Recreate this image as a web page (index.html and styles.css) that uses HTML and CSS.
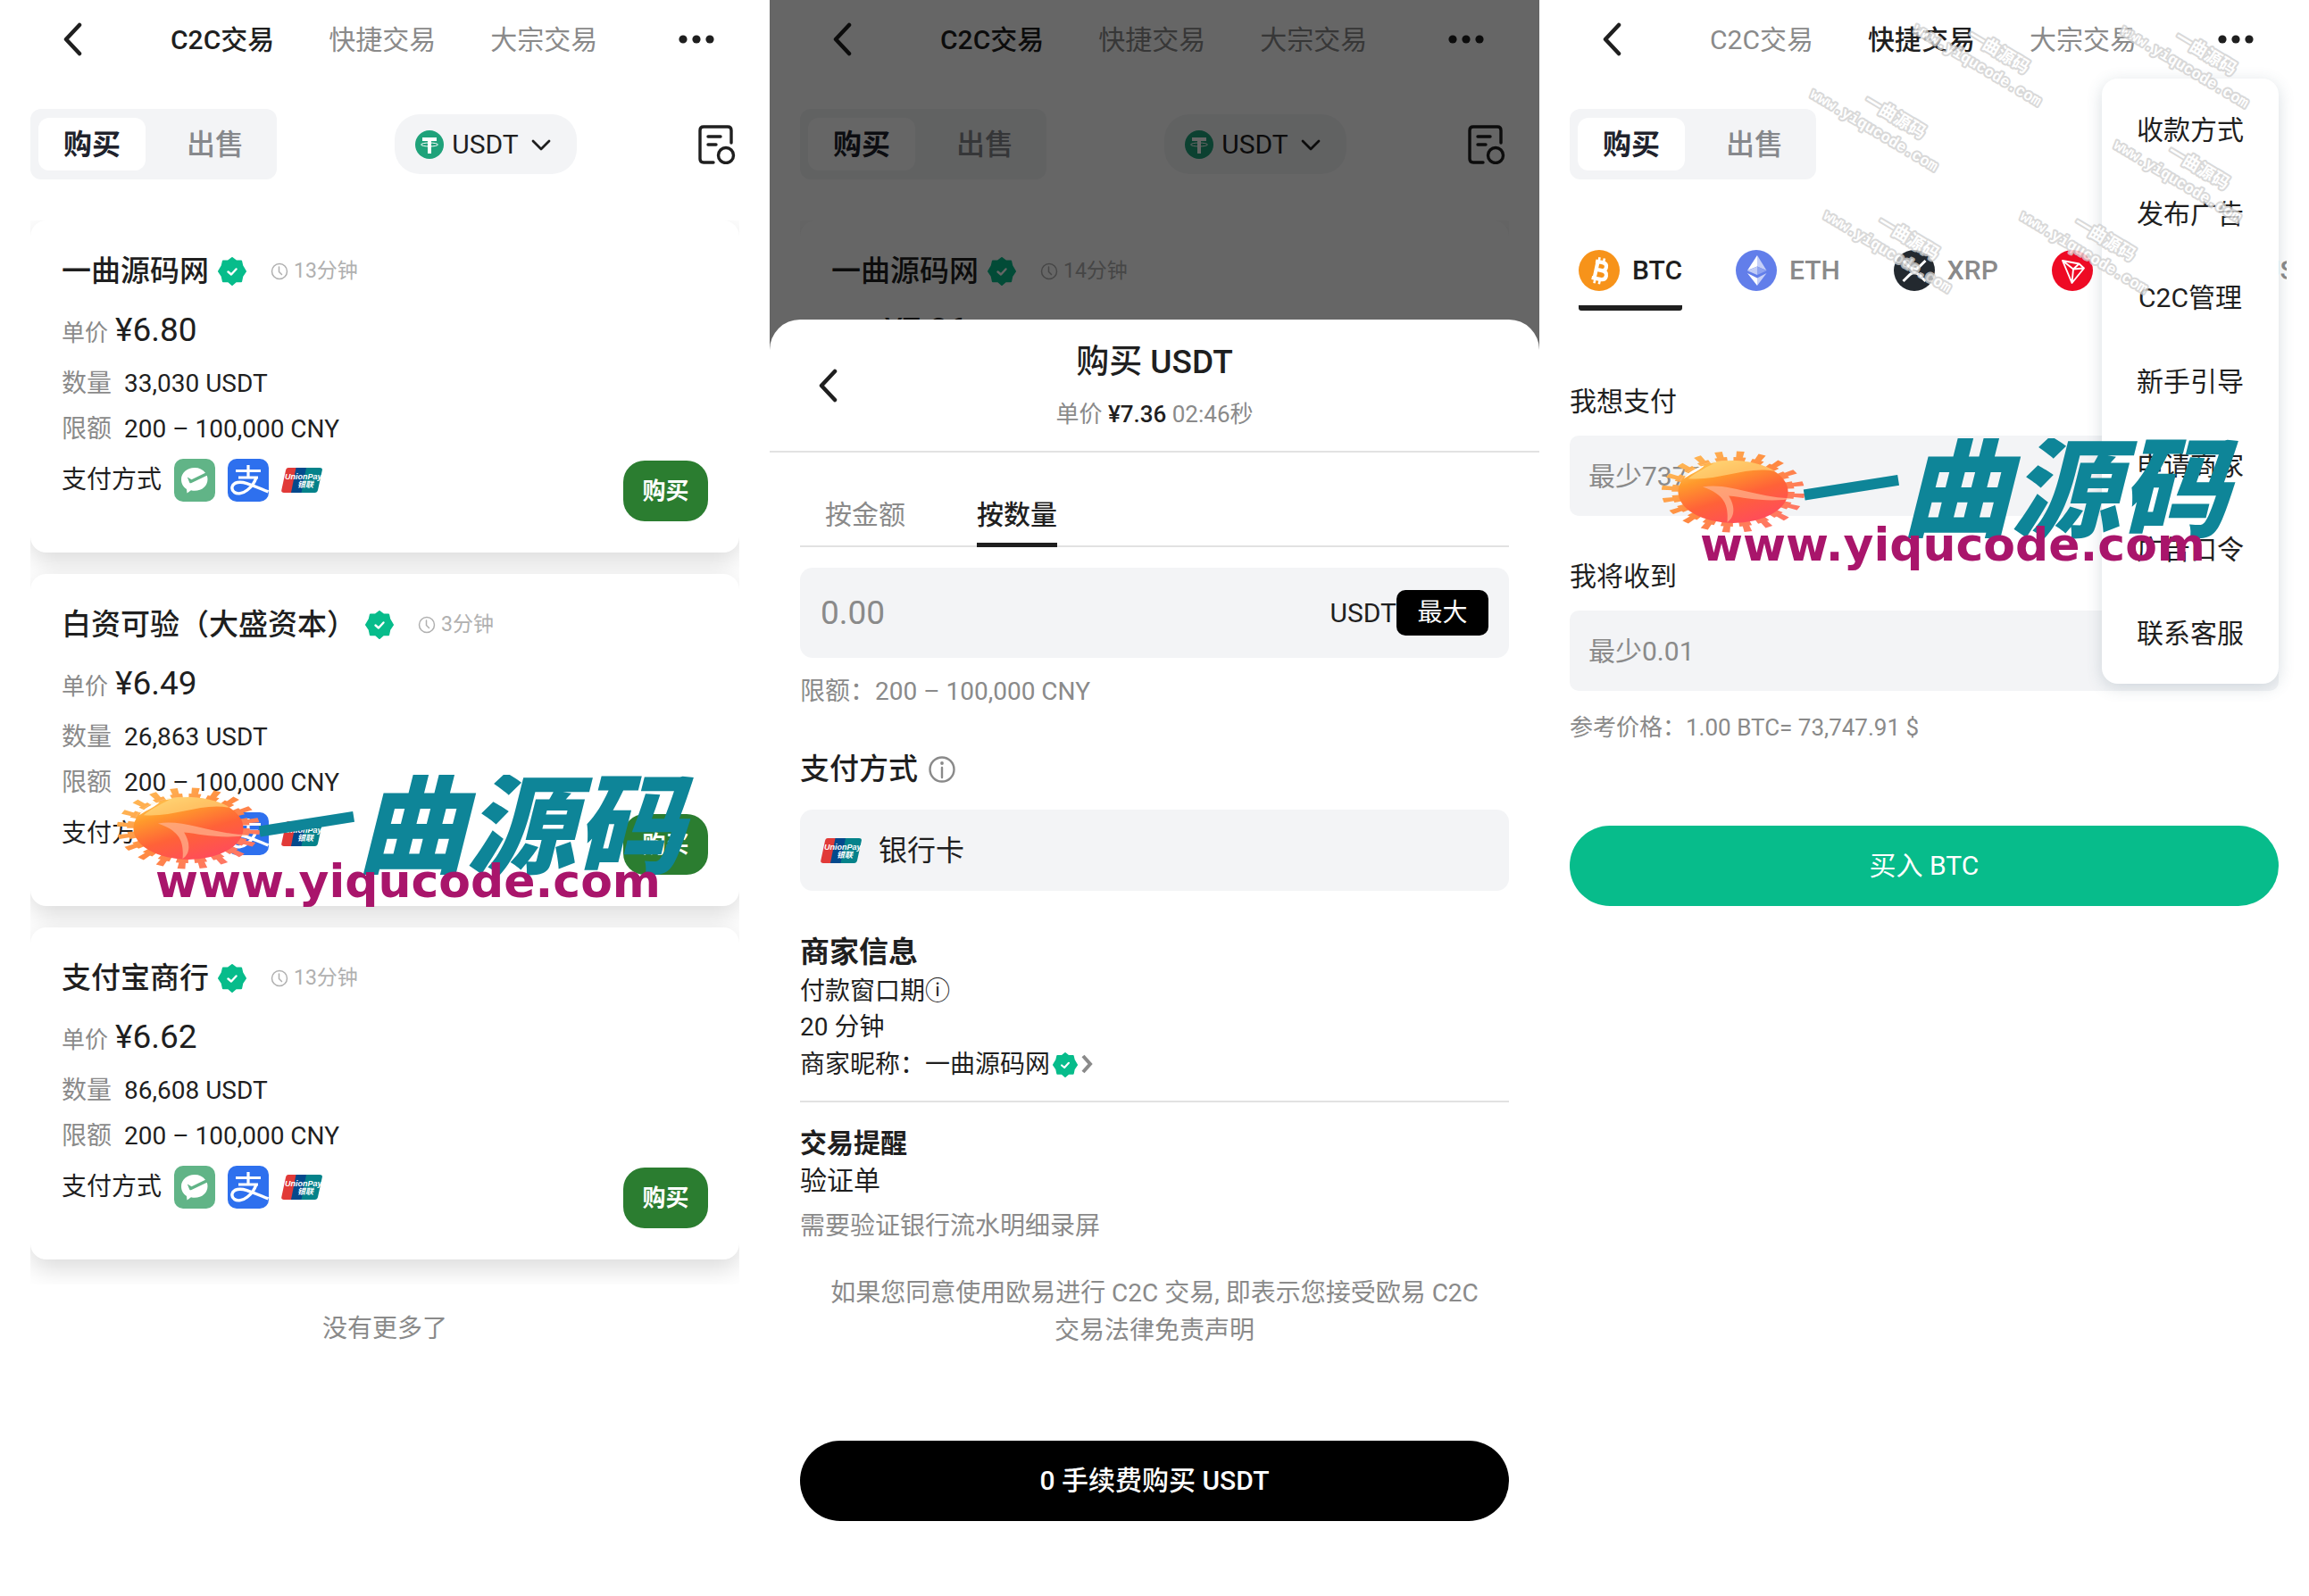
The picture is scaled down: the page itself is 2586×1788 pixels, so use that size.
FILE: index.html
```html
<!DOCTYPE html>
<html lang="zh-CN">
<head>
<meta charset="utf-8">
<meta name="viewport" content="width=device-width, initial-scale=1">
<title>C2C交易</title>
<link rel="stylesheet" href="styles.css">
</head>
<body>
<svg class="defs" aria-hidden="true">
  <defs>
    <linearGradient id="sun-fill" gradientUnits="userSpaceOnUse" x1="25" y1="5" x2="70" y2="90">
      <stop offset="0" stop-color="#ffd765"/><stop offset=".3" stop-color="#ff9a2c"/><stop offset=".6" stop-color="#ff6238"/><stop offset="1" stop-color="#ff4860"/>
    </linearGradient>
    <linearGradient id="sun-edge" gradientUnits="userSpaceOnUse" x1="0" y1="0" x2="100" y2="90">
      <stop offset="0" stop-color="#ffc95c"/><stop offset=".5" stop-color="#ff8a40"/><stop offset="1" stop-color="#ff7070"/>
    </linearGradient>
  </defs>
  <symbol id="i-back" viewBox="0 0 22 38"><path d="M19 3 4 19l15 16" fill="none" stroke="currentColor" stroke-width="4.5" stroke-linecap="round" stroke-linejoin="round"/></symbol>
  <symbol id="i-more" viewBox="0 0 40 10"><g fill="currentColor"><circle cx="5" cy="5" r="4.6"/><circle cx="20" cy="5" r="4.6"/><circle cx="35" cy="5" r="4.6"/></g></symbol>
  <symbol id="i-down" viewBox="0 0 24 14"><path d="m3 3 9 9 9-9" fill="none" stroke="currentColor" stroke-width="2.8" stroke-linecap="round" stroke-linejoin="round"/></symbol>
  <symbol id="i-orders" viewBox="0 0 42 44"><g fill="none" stroke="currentColor" stroke-width="3.4" stroke-linecap="round"><path d="M37 20V6q0-4-4-4H6Q2 2 2 6v32q0 4 4 4h11M11 13h14M11 22h9"/><circle cx="31" cy="34" r="8.5"/></g></symbol>
  <symbol id="i-tether" viewBox="0 0 32 32"><circle cx="16" cy="16" r="16" fill="#1fa27a"/><path d="M8 8h16v4h-6v14h-4V12H8z" fill="#fff"/><ellipse cx="16" cy="16" rx="9.5" ry="2" fill="none" stroke="#fff" stroke-width="1"/></symbol>
  <symbol id="i-verified" viewBox="0 0 32 32"><path d="M16 1l4.300 3.400h5.800l1.200 5.300L31 16l-3.700 5.500-1.200 5.800h-5.800L16 31l-4.300-3.700H5.900l-1.200-5.800L1 16l3.700-6.300 1.200-5.300h5.800z" fill="#07bc8b" stroke="#07bc8b" stroke-width="2" stroke-linejoin="round"/><path d="m11.500 16.500 3.500 3 5.500-6" fill="none" stroke="#fff" stroke-width="2.400" stroke-linecap="round" stroke-linejoin="round"/></symbol>
  <symbol id="i-clock" viewBox="0 0 20 20"><g fill="none" stroke="currentColor" stroke-width="1.500" stroke-linecap="round"><circle cx="10" cy="10" r="8.500"/><path d="M9.500 5v5.500l3 3"/></g></symbol>
  <symbol id="i-info" viewBox="0 0 30 30"><circle cx="15" cy="15" r="13.500" fill="none" stroke="currentColor" stroke-width="2.400"/><circle cx="15" cy="8" r="1.900" fill="currentColor"/><path d="M15 13v11" stroke="currentColor" stroke-width="2.400" stroke-linecap="round"/></symbol>
  <symbol id="i-wechat" viewBox="0 0 46 48"><rect width="46" height="48" rx="10" fill="#61b487"/><path d="M23 10c-8.500 0-15 5.700-15 13 0 5 2.300 8.500 6 11l.5 4.500 4.500-3.200c1.300.4 2.600.5 4 .5 8.500 0 14.500-5.600 14.500-12.800 0-1.500-.2-3-.8-4.200L19.500 27c-1 .5-1.900.3-2.300-.6L14.800 20.500l4.700 2.800L35 15.800C32.300 12 28 10 23 10z" fill="#fff"/></symbol>
  <symbol id="i-alipay" viewBox="0 0 46 48"><rect width="46" height="48" rx="10" fill="#2e70ee"/><g fill="none" stroke="#fff" stroke-width="3.200"><path d="M9 13.500h28M12 21h22M23 7v14"/><path d="M32 21c-2 6-6 11-10 14-5 4-11 5-14.500 2.500C3 34 4.500 28 11 26.500c7-1.500 15 2.500 34.500 10.500" stroke-width="3.400"/></g></symbol>
  <symbol id="i-union" viewBox="0 0 46 28"><path d="M8 0h14l-5.500 28H3q-3.300 0-2.700-3L5 3q.6-3 3-3z" fill="#e13a38"/><path d="M16.500 0H30l-5.500 28H11z" fill="#04498c"/><path d="M28 0h15q3.500 0 2.800 3L41 25q-.7 3-3.500 3H22.500z" fill="#04828a"/></symbol>
  <symbol id="i-btc" viewBox="0 0 46 46"><circle cx="23" cy="23" r="23" fill="#f7931a"/><g transform="rotate(12 23 23)" fill="none" stroke="#fff"><path d="M17 13.500h8q5 0 5 4.500t-5 4.500h-5.500M19.500 22.500H26q6 0 6 5t-6 5h-9.500M19.500 13.500v19" stroke-width="4.200"/><path d="M20.500 8.500v5M26 8.500v5M20.500 32v6M26 32v6" stroke-width="2.600"/></g></symbol>
  <symbol id="i-eth" viewBox="0 0 46 46"><circle cx="23" cy="23" r="23" fill="#627eea"/><path d="m24 6-11 17 11-4.500z" fill="#fff"/><path d="m24 6 10.500 17L24 18.500z" fill="#c6d0f8"/><path d="M13 23.300 24 18.500V28z" fill="#c1ccf7"/><path d="M34.500 23.300 24 18.500V28z" fill="#8fa3f0"/><path d="m13 26 11 5.500V40z" fill="#fff"/><path d="m34.500 26-10.500 5.500V40z" fill="#c6d0f8"/></symbol>
  <symbol id="i-xrp" viewBox="0 0 46 46"><circle cx="23" cy="23" r="23" fill="#23292f"/><g fill="none" stroke="#fff" stroke-width="3"><path d="m10.500 12 7.500 7.300q5 4.500 10 0l7.500-7.300M10.500 35l7.500-7.300q5-4.500 10 0l7.500 7.300"/></g></symbol>
  <symbol id="i-trx" viewBox="0 0 46 46"><circle cx="23" cy="23" r="23" fill="#ee0a24"/><path d="m12 12 18.500 3.500L36 20.500 22.500 37zM12 12l12 9.500L36 20.500M24 21.500 22.500 37M24 21.500l6.500-6" fill="none" stroke="#fff" stroke-width="1.900" stroke-linejoin="round"/></symbol>
  <symbol id="i-usd" viewBox="0 0 46 46"><circle cx="23" cy="23" r="23" fill="#2775ca"/></symbol>
  <symbol id="sun" viewBox="0 0 100 100" preserveAspectRatio="none">
    <g fill="none" stroke="url(#sun-edge)"><circle cx="50" cy="50" r="39" stroke-width="7" stroke-dasharray="8 4.250"/><circle cx="50" cy="50" r="45.500" stroke-width="8" stroke-dasharray="5 9.290" stroke-dashoffset="-2"/></g>
    <circle cx="50" cy="50" r="38" fill="url(#sun-fill)"/>
    <path d="M13 38c4-14 14-22 26-25-6 6-14 12-20 21 22 3 40-16 60-9C68 12 44 7 28 17c-8 5-13 12-15 21z" fill="#ffe08a" opacity=".6"/>
    <path d="M29 44c18-6 38 14 64 14-20 6-34-1-46-3 4 11 5 25-1 32 1-21-2-34-17-43z" fill="#ffb08c" opacity=".75"/>
    <path d="M16 34c3-8 8-13 14-16-2 5-8 9-14 16z" fill="#fff"/>
  </symbol>
</svg>

<main class="screens">
  <section class="screen">
    <header class="topbar">
      <button class="icon-btn" aria-label="返回"><svg width="22" height="38"><use href="#i-back"/></svg></button>
      <nav class="topnav"><a class="on" href="#c2c">C2C交易</a><a href="#fast">快捷交易</a><a href="#block">大宗交易</a></nav>
      <button class="icon-btn more" aria-label="更多"><svg width="40" height="10"><use href="#i-more"/></svg></button>
    </header>
    <div class="toolbar">
      <div class="segment"><button class="on">购买</button><button>出售</button></div>
      <button class="coin-pick"><svg width="32" height="32"><use href="#i-tether"/></svg>USDT<svg class="caret" width="24" height="14"><use href="#i-down"/></svg></button>
      <button class="icon-btn" aria-label="订单"><svg width="42" height="44"><use href="#i-orders"/></svg></button>
    </div>
    <div class="offers">
      <article class="offer">
        <div class="who"><h2>一曲源码网</h2><svg width="32" height="32"><use href="#i-verified"/></svg><span class="time"><svg width="20" height="20"><use href="#i-clock"/></svg>13分钟</span></div>
        <div class="price"><span>单价</span><b>¥6.80</b></div>
        <div class="fact"><span>数量</span>33,030 USDT</div>
        <div class="fact"><span>限额</span>200 – 100,000 CNY</div>
        <div class="pay"><span>支付方式</span><svg width="46" height="48"><use href="#i-wechat"/></svg><svg width="46" height="48"><use href="#i-alipay"/></svg><svg class="union" width="46" height="28"><use href="#i-union"/><text x="4" y="13">UnionPay</text><text x="18" y="22">银联</text></svg><button class="buy">购买</button></div>
      </article>
      <article class="offer">
        <div class="who"><h2>白资可验（大盛资本）</h2><svg width="32" height="32"><use href="#i-verified"/></svg><span class="time"><svg width="20" height="20"><use href="#i-clock"/></svg>3分钟</span></div>
        <div class="price"><span>单价</span><b>¥6.49</b></div>
        <div class="fact"><span>数量</span>26,863 USDT</div>
        <div class="fact"><span>限额</span>200 – 100,000 CNY</div>
        <div class="pay"><span>支付方式</span><svg width="46" height="48"><use href="#i-wechat"/></svg><svg width="46" height="48"><use href="#i-alipay"/></svg><svg class="union" width="46" height="28"><use href="#i-union"/><text x="4" y="13">UnionPay</text><text x="18" y="22">银联</text></svg><button class="buy">购买</button></div>
      </article>
      <article class="offer">
        <div class="who"><h2>支付宝商行</h2><svg width="32" height="32"><use href="#i-verified"/></svg><span class="time"><svg width="20" height="20"><use href="#i-clock"/></svg>13分钟</span></div>
        <div class="price"><span>单价</span><b>¥6.62</b></div>
        <div class="fact"><span>数量</span>86,608 USDT</div>
        <div class="fact"><span>限额</span>200 – 100,000 CNY</div>
        <div class="pay"><span>支付方式</span><svg width="46" height="48"><use href="#i-wechat"/></svg><svg width="46" height="48"><use href="#i-alipay"/></svg><svg class="union" width="46" height="28"><use href="#i-union"/><text x="4" y="13">UnionPay</text><text x="18" y="22">银联</text></svg><button class="buy">购买</button></div>
      </article>
    </div>
    <p class="end">没有更多了</p>
    <svg class="brand brand-list" width="660" height="156">
      <use href="#sun" x="2" y="14" width="162" height="92"/>
      <text class="logo-dash" transform="translate(165 109) rotate(-9)">一</text>
      <text class="logo-name" x="272" y="101">曲源码</text>
      <text class="logo-url" x="46" y="137">www.yiqucode.com</text>
    </svg>
  </section>

  <section class="screen">
    <header class="topbar">
      <button class="icon-btn" aria-label="返回"><svg width="22" height="38"><use href="#i-back"/></svg></button>
      <nav class="topnav"><a class="on" href="#c2c">C2C交易</a><a href="#fast">快捷交易</a><a href="#block">大宗交易</a></nav>
      <button class="icon-btn more" aria-label="更多"><svg width="40" height="10"><use href="#i-more"/></svg></button>
    </header>
    <div class="toolbar">
      <div class="segment"><button class="on">购买</button><button>出售</button></div>
      <button class="coin-pick"><svg width="32" height="32"><use href="#i-tether"/></svg>USDT<svg class="caret" width="24" height="14"><use href="#i-down"/></svg></button>
      <button class="icon-btn" aria-label="订单"><svg width="42" height="44"><use href="#i-orders"/></svg></button>
    </div>
    <div class="offers">
      <article class="offer">
        <div class="who"><h2>一曲源码网</h2><svg width="32" height="32"><use href="#i-verified"/></svg><span class="time"><svg width="20" height="20"><use href="#i-clock"/></svg>14分钟</span></div>
        <div class="price"><span>单价</span><b>¥7.36</b></div>
      </article>
    </div>
    <div class="shade"></div>
    <div class="sheet" role="dialog" aria-label="购买 USDT">
      <header class="sheet-head">
        <button class="icon-btn" aria-label="返回"><svg width="22" height="38"><use href="#i-back"/></svg></button>
        <div class="sheet-title"><h2>购买 USDT</h2><p>单价 <b>¥7.36</b> 02:46秒</p></div>
      </header>
      <div class="sheet-body">
        <div class="tabs"><button>按金额</button><button class="on">按数量</button></div>
        <div class="amount"><input type="text" placeholder="0.00" aria-label="数量"><span>USDT</span><button>最大</button></div>
        <p class="limit">限额：200 – 100,000 CNY</p>
        <h3 class="pay-title">支付方式 <svg width="30" height="30"><use href="#i-info"/></svg></h3>
        <button class="bank"><svg class="union" width="46" height="28"><use href="#i-union"/><text x="4" y="13">UnionPay</text><text x="18" y="22">银联</text></svg>银行卡</button>
        <div class="merchant">
          <h3>商家信息</h3>
          <p>付款窗口期ⓘ</p>
          <p>20 分钟</p>
          <p class="nick">商家昵称：<a href="#merchant">一曲源码网</a><svg width="28" height="28"><use href="#i-verified"/></svg><svg class="go" width="14" height="24" viewBox="0 0 14 24"><path d="m3 2 8 9-8 9" fill="none" stroke="#8a8a8a" stroke-width="4"/></svg></p>
        </div>
        <div class="remind">
          <h4>交易提醒</h4>
          <p class="kind">验证单</p>
          <p class="note">需要验证银行流水明细录屏</p>
          <p class="terms">如果您同意使用欧易进行 C2C 交易, 即表示您接受欧易 C2C 交易法律免责声明</p>
        </div>
        <button class="submit dark">0 手续费购买 USDT</button>
      </div>
    </div>
  </section>

  <section class="screen">
    <header class="topbar">
      <button class="icon-btn" aria-label="返回"><svg width="22" height="38"><use href="#i-back"/></svg></button>
      <nav class="topnav"><a href="#c2c">C2C交易</a><a class="on" href="#fast">快捷交易</a><a href="#block">大宗交易</a></nav>
      <button class="icon-btn more" aria-label="更多"><svg width="40" height="10"><use href="#i-more"/></svg></button>
    </header>
    <div class="toolbar">
      <div class="segment"><button class="on">购买</button><button>出售</button></div>
    </div>
    <div class="coins">
      <button class="on"><svg width="46" height="46"><use href="#i-btc"/></svg>BTC</button>
      <button><svg width="46" height="46"><use href="#i-eth"/></svg>ETH</button>
      <button><svg width="46" height="46"><use href="#i-xrp"/></svg>XRP</button>
      <button><svg width="46" height="46"><use href="#i-trx"/></svg>TRX</button>
      <button><svg width="46" height="46"><use href="#i-usd"/></svg>USDC</button>
    </div>
    <form class="quick">
      <label for="pay-in">我想支付</label>
      <input id="pay-in" type="text" placeholder="最少7375">
      <label for="get-out">我将收到</label>
      <input id="get-out" type="text" placeholder="最少0.01">
      <p>参考价格：1.00 BTC= 73,747.91 $</p>
      <button class="submit green" type="button">买入 BTC</button>
    </form>
    <ul class="menu">
      <li><a href="#m1">收款方式</a></li>
      <li><a href="#m2">发布广告</a></li>
      <li><a href="#m3">C2C管理</a></li>
      <li><a href="#m4">新手引导</a></li>
      <li><a href="#m5">申请商家</a></li>
      <li><a href="#m6">广告口令</a></li>
      <li><a href="#m7">联系客服</a></li>
    </ul>
    <svg class="stamp s1" width="170" height="120"><g transform="rotate(31)"><text x="20" y="21">www.yiqucode.com</text><text class="cn" x="76" y="-3">一曲源码</text></g></svg>
    <svg class="stamp s2" width="170" height="120"><g transform="rotate(31)"><text x="20" y="21">www.yiqucode.com</text><text class="cn" x="76" y="-3">一曲源码</text></g></svg>
    <svg class="stamp s3" width="170" height="120"><g transform="rotate(31)"><text x="20" y="21">www.yiqucode.com</text><text class="cn" x="76" y="-3">一曲源码</text></g></svg>
    <svg class="stamp s4" width="170" height="120"><g transform="rotate(31)"><text x="20" y="21">www.yiqucode.com</text><text class="cn" x="76" y="-3">一曲源码</text></g></svg>
    <svg class="stamp s5" width="170" height="120"><g transform="rotate(31)"><text x="20" y="21">www.yiqucode.com</text><text class="cn" x="76" y="-3">一曲源码</text></g></svg>
    <svg class="stamp s6" width="170" height="120"><g transform="rotate(31)"><text x="20" y="21">www.yiqucode.com</text><text class="cn" x="76" y="-3">一曲源码</text></g></svg>
    <svg class="brand brand-quick" width="660" height="156">
      <use href="#sun" x="2" y="14" width="162" height="92"/>
      <text class="logo-dash" transform="translate(165 109) rotate(-9)">一</text>
      <text class="logo-name" x="272" y="101">曲源码</text>
      <text class="logo-url" x="46" y="137">www.yiqucode.com</text>
    </svg>
  </section>
</main>
</body>
</html>
```

FILE: styles.css
```css
:root {
  --ink: #1f1f1f;
  --muted: #8a8a8a;
  --field: #f3f4f6;
  --line: #e2e2e2;
  --green: #07bc8b;
}

* { box-sizing: border-box; }

body {
  margin: 0;
  background: #fff;
  color: var(--ink);
  font-family: Roboto, "Noto Sans CJK SC", sans-serif;
  font-size: 28px;
  line-height: 40px;
}

h2, h3, h4, p, ul { margin: 0; padding: 0; }
svg { display: block; flex: none; }
a { color: inherit; text-decoration: none; }

button, input {
  margin: 0;
  padding: 0;
  border: 0;
  background: none;
  color: inherit;
  font: inherit;
}

.defs { position: absolute; width: 0; height: 0; }

.screens {
  display: grid;
  grid-template-columns: repeat(3, minmax(0, 1fr));
  min-height: 100vh;
}

.screen { position: relative; overflow: hidden; }

/* top bar */
.topbar {
  display: flex;
  align-items: center;
  height: 88px;
  padding: 0 62px 0 70px;
}

.topnav {
  display: flex;
  gap: 61px;
  margin-left: 99px;
  padding-top: 1px;
  font-size: 30px;
  color: var(--muted);
  white-space: nowrap;
}

.topnav .on { color: var(--ink); font-weight: 500; }
.more { margin-left: auto; }

/* toolbar */
.toolbar {
  display: flex;
  align-items: center;
  justify-content: space-between;
  margin-top: 34px;
  padding: 0 38px 0 34px;
}

.segment {
  display: flex;
  width: 276px;
  padding: 10px 9px;
  border-radius: 12px;
  background: var(--field);
}

.segment button {
  flex: 1;
  height: 59px;
  padding-left: 18px;
  border-radius: 12px;
  color: #86888c;
  font-size: 32px;
  font-weight: 500;
}

.segment .on {
  flex: 0 0 120px;
  padding-left: 0;
  background: #fff;
  color: #20222c;
  font-weight: 700;
}

.coin-pick {
  display: flex;
  align-items: center;
  gap: 9px;
  height: 67px;
  margin-right: 4px;
  padding: 0 28px 0 23px;
  border-radius: 28px;
  background: var(--field);
  font-size: 30px;
}

.caret { margin-left: 4px; }

/* offers */
.offers {
  display: flex;
  flex-direction: column;
  gap: 24px;
  margin: 46px 34px 0;
  padding-bottom: 28px;
  overflow: hidden;
}

.offer {
  padding: 33px 35px 34px;
  border-radius: 18px;
  background: #fff;
  box-shadow: 0 10px 28px rgba(0, 0, 0, .15);
}

.who {
  display: flex;
  align-items: center;
  height: 48px;
}

.who h2 {
  margin-right: 10px;
  font-size: 33px;
  font-weight: 500;
}

.time {
  display: flex;
  align-items: center;
  gap: 6px;
  margin-left: 27px;
  color: #b0b0b0;
  font-size: 23px;
}

.price {
  display: flex;
  align-items: baseline;
  gap: 8px;
  height: 48px;
  margin: 18px 0 16px;
  line-height: 48px;
}

.price span { color: var(--muted); font-size: 26px; }
.price b { font-size: 37px; font-weight: 400; }

.fact { margin-bottom: 11px; }
.fact span { margin-right: 14px; color: var(--muted); }

.pay {
  display: grid;
  grid-template-columns: auto 46px 46px 46px 1fr;
  grid-template-rows: 48px 23px;
  column-gap: 14px;
  align-items: center;
  padding-top: 2px;
}

.union text {
  fill: #fff;
  font-family: "Liberation Sans", "Noto Sans CJK SC", sans-serif;
  font-size: 9px;
  font-style: italic;
  font-weight: 700;
}

.buy {
  grid-row: 1 / 3;
  grid-column: 5;
  justify-self: end;
  width: 95px;
  height: 68px;
  border-radius: 24px;
  background: #2b7d30;
  color: #fff;
  font-size: 26px;
  font-weight: 700;
}

.end {
  margin-top: 30px;
  color: var(--muted);
  text-align: center;
}

/* bottom sheet */
.shade {
  position: absolute;
  inset: 0;
  background: rgba(0, 0, 0, .6);
}

.sheet {
  position: absolute;
  inset: 358px 0 0;
  border-radius: 34px 34px 0 0;
  background: #fff;
}

.sheet-head {
  display: grid;
  grid-template-columns: 22px 1fr 22px;
  align-items: center;
  padding: 24px 54px 23px;
  border-bottom: 2px solid var(--line);
}

.sheet-title { text-align: center; }

.sheet-title h2 {
  margin-bottom: 16px;
  font-size: 37px;
  font-weight: 500;
  line-height: 48px;
}

.sheet-title p {
  color: var(--muted);
  font-size: 26px;
  line-height: 36px;
}

.sheet-title b { color: var(--ink); font-weight: 500; }

.sheet-body { padding: 0 34px; }

.tabs {
  display: flex;
  gap: 80px;
  padding: 46px 28px 0;
  border-bottom: 2px solid var(--line);
}

.tabs button {
  margin-bottom: -2px;
  padding-bottom: 7px;
  border-bottom: 5px solid transparent;
  color: var(--muted);
  font-size: 30px;
  line-height: 48px;
}

.tabs .on {
  border-color: var(--ink);
  border-radius: 3px 3px 0 0;
  color: var(--ink);
  font-weight: 500;
}

.amount {
  display: flex;
  align-items: center;
  height: 101px;
  margin-top: 23px;
  padding: 0 23px;
  border-radius: 14px;
  background: var(--field);
}

.amount input { flex: 1; min-width: 0; font-size: 37px; }
.amount span { font-size: 30px; }

.amount button {
  width: 103px;
  height: 51px;
  border-radius: 10px;
  background: #000;
  color: #fff;
}

input { outline: none; }
input::placeholder { color: var(--muted); opacity: 1; }

.limit { margin-top: 18px; color: var(--muted); }

h3 { font-size: 33px; font-weight: 500; line-height: 48px; }

.pay-title {
  display: flex;
  align-items: center;
  gap: 12px;
  margin-top: 43px;
}

.pay-title svg { color: var(--muted); }

.bank {
  display: flex;
  align-items: center;
  gap: 19px;
  width: 100%;
  height: 91px;
  margin-top: 21px;
  padding: 0 23px;
  border-radius: 14px;
  background: var(--field);
  font-size: 32px;
}

.merchant {
  margin-top: 45px;
  padding-bottom: 18px;
  border-bottom: 2px solid var(--line);
}

.merchant h3 { font-weight: 700; }

.nick {
  display: flex;
  align-items: center;
  line-height: 44px;
}

.nick svg { margin-left: 3px; }

.remind { padding-top: 24px; }
.remind h4 { font-size: 30px; line-height: 44px; }
.kind { font-size: 30px; }
.note { margin-top: 11px; color: var(--muted); }

.terms {
  margin-top: 34px;
  padding: 0 24px;
  color: var(--muted);
  line-height: 42px;
  text-align: center;
}

.submit {
  width: 100%;
  height: 90px;
  border-radius: 45px;
  color: #fff;
  font-size: 30px;
}

.dark { margin-top: 102px; background: #000; font-weight: 500; }
.green { margin-top: 90px; background: var(--green); }

/* quick trade */
.coins {
  display: flex;
  gap: 60px;
  margin: 79px 25px 0 34px;
  padding-left: 10px;
  overflow: hidden;
}

.coins button {
  display: flex;
  flex: none;
  align-items: center;
  gap: 14px;
  padding-bottom: 16px;
  border-bottom: 6px solid transparent;
  color: var(--muted);
  font-size: 30px;
  font-weight: 500;
}

.coins .on { border-color: var(--ink); border-radius: 3px; color: var(--ink); }

.quick {
  display: flex;
  flex-direction: column;
  padding: 82px 34px 0;
}

.quick label { font-size: 30px; }

.quick input {
  height: 90px;
  margin: 18px 0 48px;
  padding: 0 21px;
  border-radius: 10px;
  background: var(--field);
  font-size: 30px;
}

.quick input + p { margin-top: -27px; color: var(--muted); font-size: 26px; }

.menu {
  position: absolute;
  top: 88px;
  right: 34px;
  width: 198px;
  padding: 11px 0 9px;
  border-radius: 18px;
  background: #fff;
  box-shadow: 0 4px 18px rgba(60, 90, 110, .2);
  font-size: 30px;
  line-height: 94px;
  text-align: center;
  list-style: none;
}

/* brand marks laid over the screens */
.brand, .stamp { position: absolute; pointer-events: none; }
.brand-list { left: 128px; top: 868px; }
.brand-quick { left: 134px; top: 491px; }

.logo-dash, .logo-name {
  fill: #0e8598;
  font-family: "Noto Sans CJK SC", sans-serif;
  font-size: 116px;
  font-weight: 500;
}

.logo-name {
  font-size: 122px;
  font-style: italic;
  font-weight: 900;
}

.logo-url {
  fill: #a9156b;
  font-family: "DejaVu Sans", sans-serif;
  font-size: 52px;
  font-weight: 700;
}

.stamp {
  opacity: .8;
  fill: #fff;
  stroke: #d0d0d0;
  stroke-width: 4px;
  stroke-linejoin: round;
  paint-order: stroke;
  font-family: "Liberation Mono", "Noto Sans CJK SC", monospace;
  font-size: 17px;
  font-weight: 700;
}

.stamp .cn { font-size: 19px; }

.s1 { left: 296px; top: 80px; }
.s2 { left: 412px; top: 7px; }
.s3 { left: 644px; top: 9px; }
.s4 { left: 636px; top: 137px; }
.s5 { left: 311px; top: 216px; }
.s6 { left: 531px; top: 217px; }
```
